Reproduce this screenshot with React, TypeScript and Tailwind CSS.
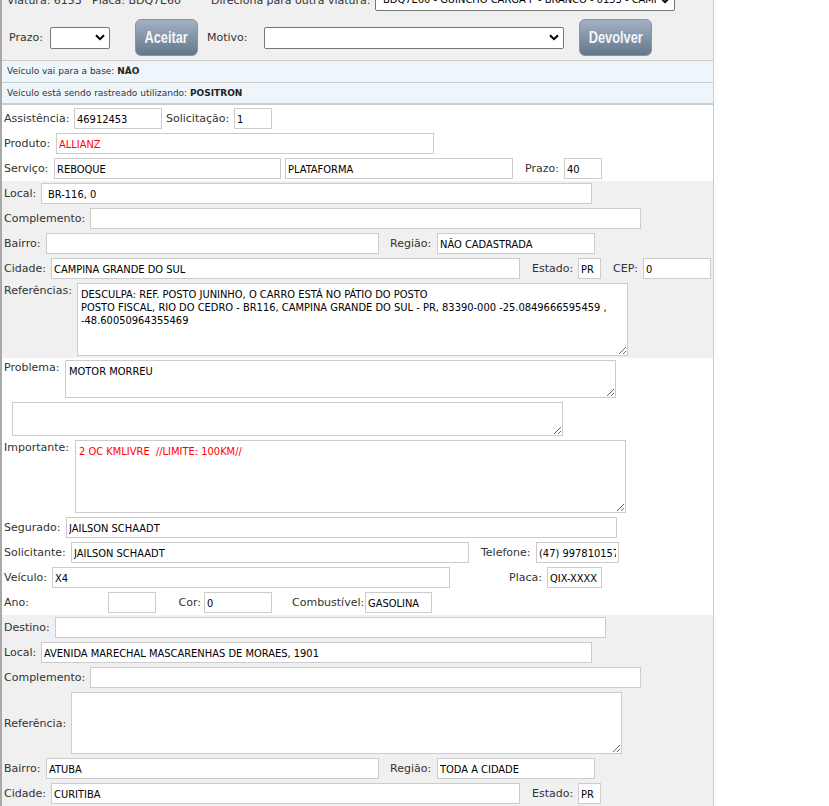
import React from "react";

const LBL =
  "font-['DejaVu_Sans',sans-serif] text-[11px] leading-[13px] whitespace-nowrap shrink-0 text-[#333333]";
const VALF = "font-['DejaVu_Sans_Condensed','Liberation_Sans',sans-serif] text-[11px]";

function L({ w, children, extra = "" }: { w: string; children: React.ReactNode; extra?: string }) {
  return <span className={`${LBL} ${w} ${extra}`}>{children}</span>;
}

function I({
  w,
  v = "",
  color = "text-black",
  extra = "px-[2px]",
}: {
  w: string;
  v?: string;
  color?: string;
  extra?: string;
}) {
  return (
    <input
      readOnly
      value={v}
      className={`${VALF} ${color} ${w} ${extra} h-[21px] shrink-0 border border-[#cccccc] bg-white pt-[1px] outline-none`}
    />
  );
}

function T({
  w,
  h,
  v = "",
  color = "text-black",
}: {
  w: string;
  h: string;
  v?: string;
  color?: string;
}) {
  return (
    <textarea
      readOnly
      value={v}
      className={`${VALF} ${color} ${w} ${h} shrink-0 resize-y border border-[#cccccc] bg-white pl-[3px] pr-[3px] pt-[4px] leading-[13px] outline-none`}
    />
  );
}

function Sel({ w, text = "" }: { w: string; text?: string }) {
  return (
    <div
      className={`${w} flex h-[22px] shrink-0 items-center rounded-[2px] border border-[#767676] bg-white pl-[7px] pr-[4px]`}
    >
      <span className={`${VALF} min-w-0 flex-1 overflow-hidden whitespace-nowrap text-black`}>{text}</span>
      <svg width="10" height="7" viewBox="0 0 10 7" className="ml-[4px] shrink-0">
        <path d="M1 1.2 L5 5.2 L9 1.2" stroke="#000" strokeWidth="2" fill="none" />
      </svg>
    </div>
  );
}

function Btn({ ml, w, children }: { ml: string; w: string; children: React.ReactNode }) {
  return (
    <button
      className={`${ml} ${w} flex h-[37px] shrink-0 items-center justify-center rounded-[6px] border border-[#8496a9] bg-linear-to-b from-[#a3b2c1] to-[#63778d]`}
    >
      <span className="inline-block scale-x-[0.8] font-['Liberation_Sans',sans-serif] text-[16px] font-bold leading-none text-[#f4f6f9]">
        {children}
      </span>
    </button>
  );
}

const ROW = "flex h-[21px] items-center";

export default function App() {
  return (
    <div className="h-[806px] w-[829px] overflow-hidden bg-white">
      <div className="-mt-[11px] w-[714px] border-l-2 border-r border-l-[#a9a9a9] border-r-[#cccccc] bg-white">
        {/* top action area */}
        <div className="bg-[#f0f0f0] pb-[4px]">
          <div className="flex h-[22px] items-center pl-[5px]">
            <L w="w-[85px]">Viatura: 6153</L>
            <L w="w-[119px]">Placa: BDQ7E60</L>
            <L w="w-[164px]">Direciona para outra viatura:</L>
            <Sel w="w-[300px]" text="BDQ7E60 - GUINCHO CARGA P - BRANCO - 6153 - CAMINHÃO" />
          </div>
          <div className="mt-[8px] flex h-[37px] items-center pl-[7px]">
            <L w="w-[41px]">Prazo:</L>
            <Sel w="w-[60px]" />
            <Btn ml="ml-[25px]" w="w-[63px]">
              Aceitar
            </Btn>
            <L w="w-[57px]" extra="ml-[9px]">
              Motivo:
            </L>
            <Sel w="w-[300px]" />
            <Btn ml="ml-[15px]" w="w-[73px]">
              Devolver
            </Btn>
          </div>
        </div>

        {/* info rows */}
        <div className="flex h-[22px] items-center border-t border-t-[#cccccc] bg-[#eef6fc] pl-[5px] pt-[1px] font-['DejaVu_Sans',sans-serif] text-[9px] text-[#333333]">
          Veículo vai para a base:&nbsp;<b className="text-[#222222]">NÃO</b>
        </div>
        <div className="flex h-[23px] items-center border-t border-b-2 border-t-[#cccccc] border-b-[#cccccc] bg-[#eef6fc] pl-[5px] pt-[2px] font-['DejaVu_Sans',sans-serif] text-[9px] text-[#333333]">
          Veículo está sendo rastreado utilizando:&nbsp;<b className="text-[#222222]">POSITRON</b>
        </div>

        {/* section 1 */}
        <div className="flex flex-col gap-[4px] bg-white pb-[2px] pl-[2px] pt-[3px]">
          <div className={ROW}>
            <L w="w-[70px]">Assistência:</L>
            <I w="w-[88px]" v="46912453" />
            <L w="w-[68px]" extra="ml-[4px]">
              Solicitação:
            </L>
            <I w="w-[38px]" v="1" />
          </div>
          <div className={ROW}>
            <L w="w-[52px]">Produto:</L>
            <I w="w-[378px]" v="ALLIANZ" color="text-[#ff0000]" />
          </div>
          <div className={ROW}>
            <L w="w-[50px]">Serviço:</L>
            <I w="w-[227px]" v="REBOQUE" />
            <div className="ml-[4px] flex">
              <I w="w-[228px]" v="PLATAFORMA" />
            </div>
            <L w="w-[39px]" extra="ml-[12px]">
              Prazo:
            </L>
            <I w="w-[38px]" v="40" />
          </div>
        </div>

        {/* section 2 */}
        <div className="flex flex-col gap-[4px] bg-[#f0f0f0] pb-[2px] pl-[2px] pt-[2px]">
          <div className={ROW}>
            <L w="w-[37px]">Local:</L>
            <I w="w-[551px]" v="BR-116, 0" extra="pl-[6px] pr-[2px]" />
          </div>
          <div className={ROW}>
            <L w="w-[86px]">Complemento:</L>
            <I w="w-[551px]" />
          </div>
          <div className={ROW}>
            <L w="w-[42px]">Bairro:</L>
            <I w="w-[333px]" />
            <L w="w-[47px]" extra="ml-[11px]">
              Região:
            </L>
            <I w="w-[158px]" v="NÃO CADASTRADA" />
          </div>
          <div className={ROW}>
            <L w="w-[47px]">Cidade:</L>
            <I w="w-[469px]" v="CAMPINA GRANDE DO SUL" />
            <L w="w-[46px]" extra="ml-[12px]">
              Estado:
            </L>
            <I w="w-[23px]" v="PR" />
            <L w="w-[30px]" extra="ml-[12px]">
              CEP:
            </L>
            <I w="w-[68px]" v="0" />
          </div>
          <div className="flex items-start">
            <L w="w-[73px]" extra="pt-[1px]">
              Referências:
            </L>
            <T
              w="w-[551px]"
              h="h-[73px]"
              v={
                "DESCULPA: REF. POSTO JUNINHO, O CARRO ESTÁ NO PÁTIO DO POSTO\nPOSTO FISCAL, RIO DO CEDRO - BR116, CAMPINA GRANDE DO SUL - PR, 83390-000 -25.0849666595459 ,\n-48.60050964355469"
              }
            />
          </div>
        </div>

        {/* section 3 */}
        <div className="flex flex-col gap-[4px] bg-white pb-[2px] pl-[2px] pt-[2px]">
          <div className="flex items-start">
            <L w="w-[61px]" extra="pt-[1px]">
              Problema:
            </L>
            <T w="w-[551px]" h="h-[38px]" v="MOTOR MORREU" />
          </div>
          <div className="flex items-start pl-[8px]">
            <T w="w-[551px]" h="h-[34px]" />
          </div>
          <div className="flex items-start">
            <L w="w-[71px]" extra="pt-[1px]">
              Importante:
            </L>
            <T w="w-[551px]" h="h-[73px]" v="2 OC KMLIVRE  //LIMITE: 100KM//" color="text-[#ff0000]" />
          </div>
          <div className={ROW}>
            <L w="w-[62px]">Segurado:</L>
            <I w="w-[551px]" v="JAILSON SCHAADT" />
          </div>
          <div className={ROW}>
            <L w="w-[67px]">Solicitante:</L>
            <I w="w-[398px]" v="JAILSON SCHAADT" />
            <L w="w-[55px]" extra="ml-[12px]">
              Telefone:
            </L>
            <I w="w-[83px]" v="(47) 997810157" />
          </div>
          <div className={ROW}>
            <L w="w-[48px]">Veículo:</L>
            <I w="w-[398px]" v="X4" />
            <L w="w-[38px]" extra="ml-[59px]">
              Placa:
            </L>
            <I w="w-[55px]" v="QIX-XXXX" />
          </div>
          <div className={ROW}>
            <L w="w-[104px]">Ano:</L>
            <I w="w-[48px]" />
            <L w="w-[26px]" extra="ml-[22px] flex justify-end pr-[3px]">
              Cor:
            </L>
            <I w="w-[68px]" v="0" />
            <L w="w-[73px]" extra="ml-[20px]">
              Combustível:
            </L>
            <I w="w-[67px]" v="GASOLINA" />
          </div>
        </div>

        {/* section 4 */}
        <div className="flex flex-col gap-[4px] bg-[#f0f0f0] pb-[40px] pl-[2px] pt-[2px]">
          <div className={ROW}>
            <L w="w-[51px]">Destino:</L>
            <I w="w-[551px]" />
          </div>
          <div className={ROW}>
            <L w="w-[37px]">Local:</L>
            <I w="w-[551px]" v="AVENIDA MARECHAL MASCARENHAS DE MORAES, 1901" />
          </div>
          <div className={ROW}>
            <L w="w-[86px]">Complemento:</L>
            <I w="w-[551px]" />
          </div>
          <div className="flex items-center">
            <L w="w-[67px]">Referência:</L>
            <T w="w-[551px]" h="h-[62px]" />
          </div>
          <div className={ROW}>
            <L w="w-[42px]">Bairro:</L>
            <I w="w-[333px]" v="ATUBA" />
            <L w="w-[47px]" extra="ml-[11px]">
              Região:
            </L>
            <I w="w-[158px]" v="TODA A CIDADE" />
          </div>
          <div className={ROW}>
            <L w="w-[47px]">Cidade:</L>
            <I w="w-[469px]" v="CURITIBA" />
            <L w="w-[46px]" extra="ml-[12px]">
              Estado:
            </L>
            <I w="w-[23px]" v="PR" />
          </div>
        </div>
      </div>
    </div>
  );
}
